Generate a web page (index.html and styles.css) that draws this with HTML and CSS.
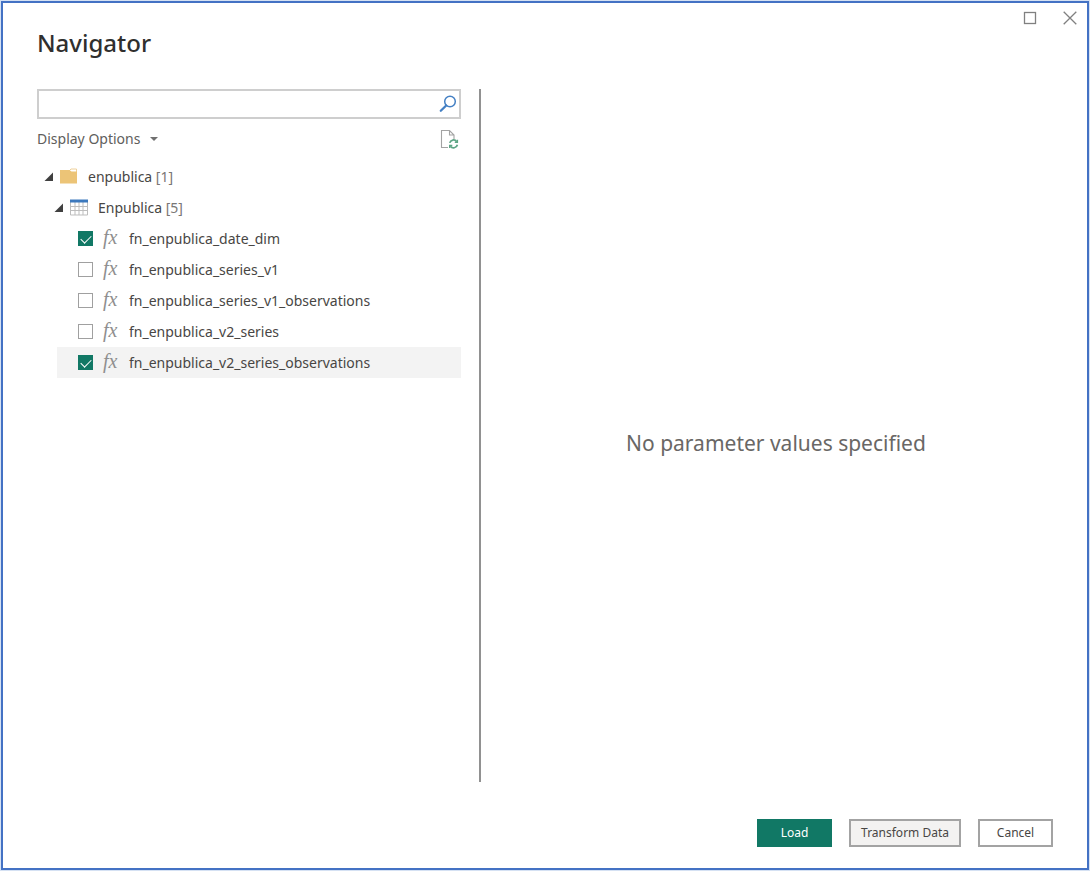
FILE: index.html
```html
<!DOCTYPE html>
<html lang="en">
<head>
<meta charset="utf-8">
<meta name="viewport" content="width=device-width, initial-scale=1">
<title>Navigator</title>
<link rel="stylesheet" href="styles.css">
</head>
<body>
<main class="dialog">
  <header class="titlebar">
    <h1 class="title">Navigator</h1>
    <div class="window-controls">
      <button class="icon-button" type="button" aria-label="Maximize">
        <svg width="14" height="14" viewBox="0 0 14 14" fill="none" stroke="#808080" stroke-width="1.3"><rect x="1.5" y="1.5" width="11" height="11"/></svg>
      </button>
      <button class="icon-button" type="button" aria-label="Close">
        <svg width="14" height="14" viewBox="0 0 14 14" fill="none" stroke="#808080" stroke-width="1.3"><path d="M.7.7l12.6 12.6M13.3.7L.7 13.3"/></svg>
      </button>
    </div>
  </header>

  <div class="content">
    <section class="browser">
      <div class="search">
        <input class="search-input" type="text" aria-label="Search">
        <button class="icon-button" type="button" aria-label="Run search">
          <svg width="18" height="18" viewBox="0 0 18 18" fill="none" stroke="#4480c4"><circle cx="11" cy="6.5" r="5.3" stroke-width="1.5"/><path d="M7.2 10.5L1.8 15.8" stroke-width="2.3" stroke-linecap="round"/></svg>
        </button>
      </div>

      <div class="options">
        <button class="options-button" type="button">Display Options
          <svg width="8" height="4" viewBox="0 0 8 4"><path d="M0 0h8L4 4z" fill="#707070"/></svg>
        </button>
        <button class="icon-button" type="button" aria-label="Refresh">
          <svg width="20" height="20" viewBox="0 0 20 20" fill="none"><path d="M9 18.5H2.500v-17h8l4.500 4.500v4M10.500 1.500V6H15" stroke="#a3a3a3" stroke-width="1.1"/><g stroke="#5da585" stroke-width="1.7"><path d="M10.700 13.900a3.900 3.900 0 0 1 7-1.200M18.400 15.800a3.900 3.900 0 0 1-7 1.400"/><path d="M18.400 10.700v2.500h-2.600M10.700 19v-2.500h2.600" stroke-width="1.4"/></g></svg>
        </button>
      </div>

      <ul class="tree">
        <li>
          <div class="row">
            <svg class="arrow" width="10" height="9" viewBox="0 0 10 9"><path d="M9 .5v8.500H.5z" fill="#404040"/></svg>
            <svg class="node-icon" width="18" height="17" viewBox="0 0 18 17"><path d="M9 3l2-2h5.500v4" fill="#fff" stroke="#eed09a"/><path d="M0 2h9.500L11.500 3.500H17v12H0z" fill="#ecc477"/></svg>
            <span>enpublica <span class="count">[1]</span></span>
          </div>
          <ul class="branch">
            <li>
              <div class="row">
                <svg class="arrow" width="10" height="9" viewBox="0 0 10 9"><path d="M9 .5v8.500H.5z" fill="#404040"/></svg>
                <svg class="node-icon" width="18" height="17" viewBox="0 0 18 17"><path d="M.5 3v13h17V3M.5 7.500h17M.5 11.500h17M5 3v13M9 3v13M13 3v13" fill="none" stroke="#bdbdbd"/><path d="M0 .5h18v3H0z" fill="#3d79bd"/></svg>
                <span>Enpublica <span class="count">[5]</span></span>
              </div>
              <ul>
                <li><label class="row leaf"><input class="check" type="checkbox" checked><span class="fx" aria-hidden="true">fx</span><span>fn_enpublica_date_dim</span></label></li>
                <li><label class="row leaf"><input class="check" type="checkbox"><span class="fx" aria-hidden="true">fx</span><span>fn_enpublica_series_v1</span></label></li>
                <li><label class="row leaf"><input class="check" type="checkbox"><span class="fx" aria-hidden="true">fx</span><span>fn_enpublica_series_v1_observations</span></label></li>
                <li><label class="row leaf"><input class="check" type="checkbox"><span class="fx" aria-hidden="true">fx</span><span>fn_enpublica_v2_series</span></label></li>
                <li><label class="row leaf selected"><input class="check" type="checkbox" checked><span class="fx" aria-hidden="true">fx</span><span>fn_enpublica_v2_series_observations</span></label></li>
              </ul>
            </li>
          </ul>
        </li>
      </ul>
    </section>

    <section class="preview">
      <p class="message">No parameter values specified</p>
    </section>
  </div>

  <footer class="actions">
    <button class="button primary" type="button">Load</button>
    <button class="button shaded" type="button">Transform Data</button>
    <button class="button" type="button">Cancel</button>
  </footer>
</main>
</body>
</html>
```
FILE: styles.css
```css
* {
  box-sizing: border-box;
}

body {
  margin: 0;
  padding: 1px;
  background: #d5e1f3;
  color: #484644;
  font: 14px/20px "Segoe UI", "Noto Sans", "Open Sans", sans-serif;
}

ul {
  margin: 0;
  padding: 0;
  list-style: none;
}

button {
  font: inherit;
  color: inherit;
}

.dialog {
  display: flex;
  flex-direction: column;
  min-height: calc(100vh - 2px);
  border: 2px solid #4472c4;
  background: #fff;
}

.titlebar {
  display: flex;
  justify-content: space-between;
  align-items: flex-start;
  height: 86px;
  padding: 8px 10px 0 34px;
}

.title {
  margin: 16px 0 0;
  color: #302f2e;
  font-size: 24px;
  font-weight: 500;
  line-height: 32px;
}

.window-controls {
  display: flex;
  gap: 26px;
}

.icon-button {
  display: flex;
  padding: 0;
  border: 0;
  background: none;
}

.content {
  display: flex;
  flex: 1;
  padding: 0 16px 0 34px;
}

.browser {
  flex: none;
  width: 41%;
}

.search {
  display: flex;
  align-items: center;
  height: 30px;
  padding-right: 2px;
  border: 2px solid #cecece;
}

.search-input {
  flex: 1;
  min-width: 0;
  height: 100%;
  padding: 0 6px;
  border: 0;
  outline: 0;
  background: none;
  font: inherit;
}

.options {
  display: flex;
  align-items: center;
  justify-content: space-between;
  height: 42px;
  padding: 0 2px 2px 0;
}

.options-button {
  display: flex;
  align-items: center;
  gap: 10px;
  padding: 0;
  border: 0;
  background: none;
  color: #605e5c;
}

.row {
  display: flex;
  align-items: center;
  height: 31px;
  padding-left: 7px;
}

.arrow {
  margin-right: 6px;
}

.node-icon {
  margin-right: 10px;
}

.branch {
  padding-left: 10px;
}

.branch ul {
  padding-left: 10px;
}

.count {
  color: #797775;
}

.leaf {
  padding-left: 21px;
}

.selected {
  background: #f3f3f3;
}

.check {
  appearance: none;
  flex: none;
  width: 15px;
  height: 15px;
  margin: 0;
  border: 1px solid #a0a0a0;
  background: #fff;
}

.check:checked {
  border-color: #117865;
  background: #117865;
}

.check:checked::before {
  content: "";
  display: block;
  width: 9px;
  height: 5px;
  margin: 3px 2px;
  border: solid #fff;
  border-width: 0 0 1px 1px;
  transform: rotate(-45deg);
}

.fx {
  width: 26px;
  margin-left: 10px;
  padding-bottom: 4px;
  color: #8f8f8f;
  font: italic 20px/20px "Liberation Serif", serif;
}

.preview {
  display: flex;
  flex: 1;
  align-items: center;
  justify-content: center;
  margin-left: 18px;
  border-left: 2px solid #919191;
}

.message {
  margin: 0;
  padding-top: 14px;
  color: #696765;
  font-size: 21px;
  line-height: 30px;
}

.actions {
  display: flex;
  justify-content: flex-end;
  gap: 17px;
  padding: 37px 34px 21px;
}

.button {
  min-width: 75px;
  height: 28px;
  padding: 0 10px;
  border: 2px solid #a3a3a3;
  background: #fff;
  font-size: 12px;
  line-height: 20px;
}

.primary {
  border-color: #117865;
  background: #117865;
  color: #fff;
}

.shaded {
  background: #f3f2f1;
}
```
